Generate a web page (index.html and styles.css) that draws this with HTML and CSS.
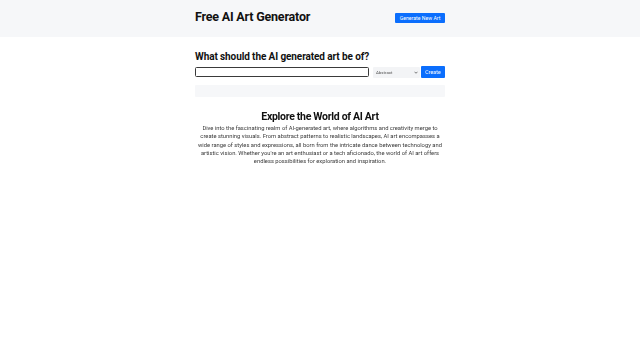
FILE: index.html
```html
<!DOCTYPE html>
<html lang="en">
<head>
    <meta charset="UTF-8">
    <meta name="viewport" content="width=device-width, initial-scale=1.0">
    <title>Free AI Art Generator</title>
    <link rel="stylesheet" href="styles.css">
</head>
<body>
    <header class="topbar">
        <div class="wrap topbar-inner">
            <h1>Free AI Art Generator</h1>
            <button class="btn">Generate New Art</button>
        </div>
    </header>

    <main class="wrap">
        <h2>What should the AI generated art be of?</h2>
        <form class="prompt-form">
            <input type="text" class="prompt" autofocus>
            <div class="style-pick">
                <select>
                    <option>Abstract</option>
                </select>
                <svg class="chev" viewBox="0 0 8 5"><path d="M1 1l3 3 3-3" fill="none" stroke="#444" stroke-width="1.4"/></svg>
            </div>
            <button type="button" class="btn">Create</button>
        </form>
        <div class="result"></div>

        <section class="about">
            <h3>Explore the World of AI Art</h3>
            <p>Dive into the fascinating realm of AI-generated art, where algorithms and creativity merge to create stunning visuals. From abstract patterns to realistic landscapes, AI art encompasses a wide range of styles and expressions, all born from the intricate dance between technology and artistic vision. Whether you're an art enthusiast or a tech aficionado, the world of AI art offers endless possibilities for exploration and inspiration.</p>
        </section>
    </main>
</body>
</html>
```

FILE: styles.css
```css
body {
    margin: 0;
    font-family: Roboto, 'Liberation Sans', Arial, sans-serif;
    color: #111;
    background: #fff;
}
.wrap {
    width: 250px;
    margin: 0 auto;
}
.topbar {
    background-color: #f6f7f9;
    height: 37px;
}
.topbar-inner {
    display: flex;
    align-items: center;
    justify-content: space-between;
    height: 100%;
}
h1 {
    margin: 0 0 4px;
    font-size: 12.5px;
    letter-spacing: -0.2px;
    font-weight: 700;
}
.btn {
    background-color: #0b6efd;
    color: #fff;
    border: none;
    border-radius: 1px;
    font-family: inherit;
    font-size: 5.2px;
    padding: 0 4px;
    cursor: pointer;
}
.topbar .btn {
    width: 50px;
    height: 10px;
    padding: 0;
    margin-bottom: 1px;
}
h2 {
    margin: 14px 0 4px;
    font-size: 10px;
    letter-spacing: -0.1px;
    font-weight: 700;
}
.prompt-form {
    display: flex;
    align-items: center;
}
.prompt {
    flex: 1;
    height: 10px;
    box-sizing: border-box;
    border: 1px solid #3a3a3a;
    border-radius: 1.5px;
    padding: 0 2px;
    font-size: 6px;
    margin-right: 4px;
    outline: none;
}
.style-pick {
    position: relative;
    width: 47px;
    height: 11px;
    margin-right: 1px;
}
.style-pick select {
    appearance: none;
    display: block;
    box-sizing: border-box;
    width: 100%;
    height: 100%;
    font-family: inherit;
    font-size: 4.4px;
    line-height: 11px;
    border: none;
    border-radius: 1px;
    background: #f3f4f6;
    color: #555;
    padding: 0 3px;
    outline: none;
}
.chev {
    position: absolute;
    right: 2px;
    top: 4.5px;
    width: 4px;
    height: 3px;
    pointer-events: none;
}
.prompt-form .btn {
    height: 12px;
    width: 24px;
    padding: 0;
    font-size: 5.3px;
}
.result {
    background-color: #f6f7f9;
    height: 12px;
    margin-top: 7px;
    border-radius: 1px;
}
.about {
    text-align: center;
    margin-top: 13px;
}
h3 {
    margin: 0 0 1px;
    font-size: 10.5px;
    letter-spacing: -0.3px;
    font-weight: 700;
}
.about p {
    margin: 0;
    font-size: 5.8px;
    line-height: 8.25px;
    color: #3a3a3a;
}
```
